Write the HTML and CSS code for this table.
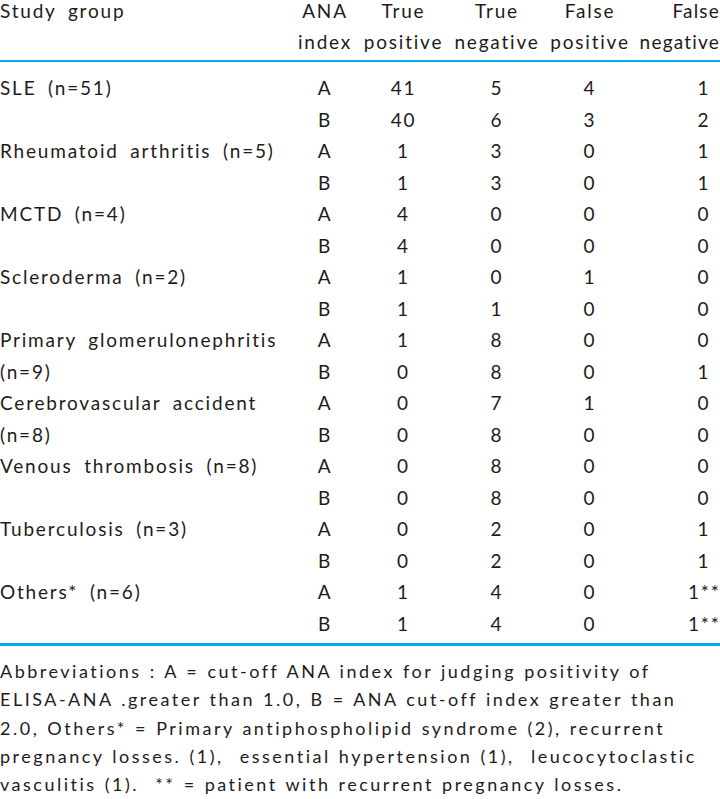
FILE: index.html
```html
<!DOCTYPE html>
<html lang="en">
<head>
<meta charset="utf-8">
<title>ELISA-ANA study groups</title>
<link rel="stylesheet" href="styles.css">
</head>
<body>
<table class="data">
  <colgroup>
    <col class="c-group"><col class="c-ana"><col class="c-tp"><col class="c-tn"><col class="c-fp"><col class="c-fn">
  </colgroup>
  <thead>
    <tr>
      <th class="left">Study group</th>
      <th>ANA<br>index</th>
      <th>True<br>positive</th>
      <th>True<br>negative</th>
      <th>False<br>positive</th>
      <th class="right">False<br>negative</th>
    </tr>
  </thead>
  <tbody>
    <tr><td class="left">SLE (n=51)</td><td>A</td><td>41</td><td>5</td><td>4</td><td class="fn"><span>1</span></td></tr>
    <tr><td class="left"></td><td>B</td><td>40</td><td>6</td><td>3</td><td class="fn"><span>2</span></td></tr>
    <tr><td class="left">Rheumatoid arthritis (n=5)</td><td>A</td><td>1</td><td>3</td><td>0</td><td class="fn"><span>1</span></td></tr>
    <tr><td class="left"></td><td>B</td><td>1</td><td>3</td><td>0</td><td class="fn"><span>1</span></td></tr>
    <tr><td class="left">MCTD (n=4)</td><td>A</td><td>4</td><td>0</td><td>0</td><td class="fn"><span>0</span></td></tr>
    <tr><td class="left"></td><td>B</td><td>4</td><td>0</td><td>0</td><td class="fn"><span>0</span></td></tr>
    <tr><td class="left">Scleroderma (n=2)</td><td>A</td><td>1</td><td>0</td><td>1</td><td class="fn"><span>0</span></td></tr>
    <tr><td class="left"></td><td>B</td><td>1</td><td>1</td><td>0</td><td class="fn"><span>0</span></td></tr>
    <tr><td class="left">Primary glomerulonephritis</td><td>A</td><td>1</td><td>8</td><td>0</td><td class="fn"><span>0</span></td></tr>
    <tr><td class="left">(n=9)</td><td>B</td><td>0</td><td>8</td><td>0</td><td class="fn"><span>1</span></td></tr>
    <tr><td class="left">Cerebrovascular accident</td><td>A</td><td>0</td><td>7</td><td>1</td><td class="fn"><span>0</span></td></tr>
    <tr><td class="left">(n=8)</td><td>B</td><td>0</td><td>8</td><td>0</td><td class="fn"><span>0</span></td></tr>
    <tr><td class="left">Venous thrombosis (n=8)</td><td>A</td><td>0</td><td>8</td><td>0</td><td class="fn"><span>0</span></td></tr>
    <tr><td class="left"></td><td>B</td><td>0</td><td>8</td><td>0</td><td class="fn"><span>0</span></td></tr>
    <tr><td class="left">Tuberculosis (n=3)</td><td>A</td><td>0</td><td>2</td><td>0</td><td class="fn"><span>1</span></td></tr>
    <tr><td class="left"></td><td>B</td><td>0</td><td>2</td><td>0</td><td class="fn"><span>1</span></td></tr>
    <tr><td class="left">Others* (n=6)</td><td>A</td><td>1</td><td>4</td><td>0</td><td class="fn"><span>1**</span></td></tr>
    <tr><td class="left"></td><td>B</td><td>1</td><td>4</td><td>0</td><td class="fn"><span>1**</span></td></tr>
  </tbody>
</table>
<p class="note">Abbreviations : A = cut-off ANA index for judging positivity of<br>ELISA-ANA .greater than 1.0, B = ANA cut-off index greater than<br>2.0, Others* = Primary antiphospholipid syndrome (2), recurrent<br>pregnancy losses. (1), &nbsp;essential hypertension (1), &nbsp;leucocytoclastic<br>vasculitis (1). &nbsp;** = patient with recurrent pregnancy losses.</p>
</body>
</html>
```
FILE: styles.css
```css
body {
  margin: 0;
  background: #ffffff;
  color: #1f1b1c;
  font-family: Lato, "Open Sans", sans-serif;
  overflow: hidden;
}

.data {
  width: 720px;
  border-collapse: collapse;
  table-layout: fixed;
  font-size: 19px;
  letter-spacing: 1.8px;
  word-spacing: 5px;
  margin-top: -5px;
}

.c-group { width: 290px; }
.c-ana { width: 70px; }
.c-tp { width: 87px; }
.c-tn { width: 100px; }
.c-fp { width: 86px; }
.c-fn { width: 87px; }

.data th {
  font-weight: normal;
  line-height: 31px;
  padding: 0 0 3px;
  border-bottom: 2px solid #00aeef;
  vertical-align: top;
  text-align: center;
  white-space: nowrap;
}

.data td {
  line-height: 31.5px;
  padding: 0;
  text-align: center;
  white-space: nowrap;
}

.data .left { text-align: left; }
.data .right { text-align: right; }
.data th.right { letter-spacing: 1.2px; }

.data td.fn { text-align: right; }
.data td.fn span {
  display: inline-block;
  width: 32px;
  text-align: center;
}

.data tbody tr:first-child td { padding-top: 10px; }
.data tbody tr:last-child td {
  padding-bottom: 4px;
  border-bottom: 3px solid #00aeef;
}

.note {
  margin: 11px 0 0;
  font-size: 18px;
  line-height: 28.3px;
  letter-spacing: 2.5px;
  word-spacing: 1px;
  white-space: nowrap;
}
```
